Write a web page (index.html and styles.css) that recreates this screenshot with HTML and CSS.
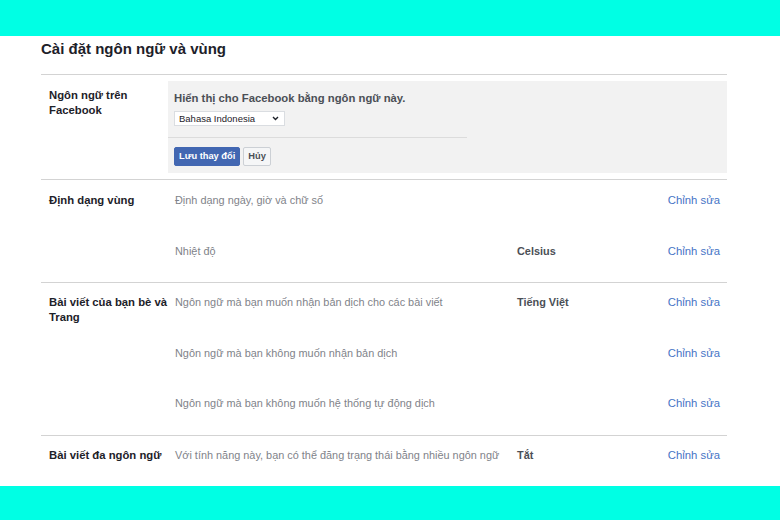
FILE: index.html
```html
<!DOCTYPE html>
<html lang="vi">
<head>
<meta charset="utf-8">
<title>Cài đặt ngôn ngữ và vùng</title>
<link rel="stylesheet" href="styles.css">
</head>
<body>
<div class="band"></div>
<main class="page">
  <div class="settings">
    <h1 class="title">Cài đặt ngôn ngữ và vùng</h1>

    <section class="sec">
      <div class="label">Ngôn ngữ trên<br>Facebook</div>
      <div class="lang-box">
        <div class="lang-top">
          <div class="hint">Hiển thị cho Facebook bằng ngôn ngữ này.</div>
          <div class="select">
            <span>Bahasa Indonesia</span>
            <svg class="chev" width="7" height="5" viewBox="0 0 7 5"><path d="M1 1 L3.5 3.5 L6 1" fill="none" stroke="#1d2129" stroke-width="1.4"/></svg>
          </div>
        </div>
        <div class="actions">
          <button class="btn btn-primary">Lưu thay đổi</button>
          <button class="btn">Hủy</button>
        </div>
      </div>
    </section>

    <section class="sec">
      <div class="label">Định dạng vùng</div>
      <div class="items">
        <div class="item"><span class="desc">Định dạng ngày, giờ và chữ số</span><span class="value"></span><a class="edit" href="#">Chỉnh sửa</a></div>
        <div class="item"><span class="desc">Nhiệt độ</span><span class="value">Celsius</span><a class="edit" href="#">Chỉnh sửa</a></div>
      </div>
    </section>

    <section class="sec sec-tight">
      <div class="label">Bài viết của bạn bè và<br>Trang</div>
      <div class="items">
        <div class="item"><span class="desc">Ngôn ngữ mà bạn muốn nhận bản dịch cho các bài viết</span><span class="value">Tiếng Việt</span><a class="edit" href="#">Chỉnh sửa</a></div>
        <div class="item"><span class="desc">Ngôn ngữ mà bạn không muốn nhận bản dịch</span><span class="value"></span><a class="edit" href="#">Chỉnh sửa</a></div>
        <div class="item"><span class="desc">Ngôn ngữ mà bạn không muốn hệ thống tự động dịch</span><span class="value"></span><a class="edit" href="#">Chỉnh sửa</a></div>
      </div>
    </section>

    <section class="sec sec-tight">
      <div class="label">Bài viết đa ngôn ngữ</div>
      <div class="items">
        <div class="item"><span class="desc">Với tính năng này, bạn có thể đăng trạng thái bằng nhiều ngôn ngữ</span><span class="value">Tắt</span><a class="edit" href="#">Chỉnh sửa</a></div>
      </div>
    </section>
  </div>
</main>
</body>
</html>
```

FILE: styles.css
```css
* {
  box-sizing: border-box;
  margin: 0;
  padding: 0;
}

html,
body {
  width: 780px;
  height: 520px;
  overflow: hidden;
}

body {
  font-family: "Liberation Sans", Arial, sans-serif;
  color: #1d2129;
  background: #00ffe4;
}

.band {
  height: 36px;
  background: #00ffe4;
}

.page {
  height: 450px;
  background: #ffffff;
  overflow: hidden;
  padding-left: 41px;
}

.settings {
  width: 686px;
}

.title {
  font-size: 15px;
  font-weight: bold;
  line-height: 18px;
  padding-top: 4px;
  margin-bottom: 16px;
  color: #1d2129;
}

.sec {
  display: grid;
  grid-template-columns: 127px 1fr;
  border-top: 1px solid #d3d3d3;
}

.label {
  padding: 13px 0 0 8px;
  font-size: 11.3px;
  font-weight: bold;
  line-height: 15px;
  white-space: nowrap;
  color: #1d2129;
}

.sec-tight .label {
  padding-top: 12px;
}

.lang-box {
  margin: 6px 0;
  background: #f2f2f2;
}

.lang-top {
  width: 299px;
  padding: 10px 6px 11px;
  border-bottom: 1px solid #dcdcdc;
}

.hint {
  font-size: 11.3px;
  font-weight: bold;
  line-height: 15px;
  color: #4b4f56;
}

.select {
  margin-top: 5px;
  width: 111px;
  height: 15px;
  background: #ffffff;
  border: 1px solid #dadde1;
  display: flex;
  align-items: center;
  justify-content: space-between;
  padding: 0 5px 0 4px;
  font-size: 9.5px;
  color: #1d2129;
}

.chev {
  display: block;
}

.actions {
  display: flex;
  gap: 3px;
  padding: 9px 6px 7px;
}

.btn {
  height: 19px;
  padding: 0 4px;
  font-family: inherit;
  font-size: 9.3px;
  font-weight: bold;
  line-height: 17px;
  border: 1px solid #ccd0d5;
  border-radius: 2px;
  background: #f5f6f7;
  color: #4b4f56;
}

.btn-primary {
  background: #4267b2;
  border-color: #4267b2;
  color: #ffffff;
}

.item {
  display: grid;
  grid-template-columns: 342px 1fr auto;
  height: 51px;
  padding: 13px 7px 0;
  line-height: 15px;
}

.sec-tight .item {
  height: 50.67px;
  padding-top: 12px;
}

.desc {
  font-size: 10.9px;
  color: #7f838a;
}

.value {
  font-size: 10.9px;
  font-weight: bold;
  color: #4b4f56;
}

.edit {
  font-size: 11.3px;
  color: #4674c6;
  text-decoration: none;
}
```
